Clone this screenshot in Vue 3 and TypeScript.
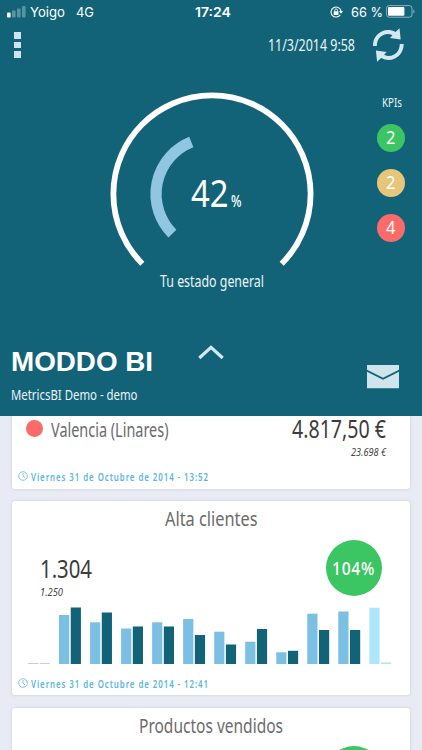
<script setup lang="ts">
import { h } from 'vue'

interface FitProps {
  text: string
  w: number
  cap: number
}

// Condensed label: the box is as wide as the text and as high as its capitals.
const FitText = (props: FitProps) =>
  h('svg', { width: props.w, height: props.cap, overflow: 'visible', class: 'fit' }, [
    h('text', { x: 0, y: props.cap, textLength: props.w, lengthAdjust: 'spacingAndGlyphs' }, props.text),
  ])
FitText.props = ['text', 'w', 'cap']

interface Kpi {
  count: string
  tone: string
}

const kpis: Kpi[] = [
  { count: '2', tone: 'green' },
  { count: '2', tone: 'amber' },
  { count: '4', tone: 'red' },
]

interface Pair {
  a: number
  b: number
  tone?: string
}

const pairs: Pair[] = [
  { a: 1, b: 1, tone: 'empty' },
  { a: 49, b: 56.5 },
  { a: 41.7, b: 51.5 },
  { a: 35.5, b: 37.5 },
  { a: 41.7, b: 37.5 },
  { a: 45, b: 29 },
  { a: 32.3, b: 19.5 },
  { a: 22.3, b: 35 },
  { a: 11.7, b: 13.2 },
  { a: 50.3, b: 34 },
  { a: 52.5, b: 34 },
  { a: 56.3, b: 1.5, tone: 'current' },
]
const pitch = 31.03
const chartHeight = 57
</script>

<template>
  <main class="phone">
    <header class="hero">
      <div class="status">
        <div class="carrier">
          <svg width="19" height="12" viewBox="0 0 19 12" fill="#fff">
            <rect x="0" y="6.5" width="3.6" height="5" rx="1" />
            <rect x="5" y="4.5" width="3.6" height="7" rx="1" opacity=".3" />
            <rect x="10" y="2.5" width="3.6" height="9" rx="1" opacity=".3" />
            <rect x="15" y="0" width="3.6" height="11.5" rx="1" opacity=".3" />
          </svg>
          <FitText class="sys yoigo" text="Yoigo" :w="35" :cap="10" />
          <FitText class="sys" text="4G" :w="18" :cap="10" />
        </div>
        <FitText class="sys clock-time" text="17:24" :w="36" :cap="10" />
        <div class="power">
          <svg class="lock" width="13" height="12" viewBox="0 0 13 12" fill="none" stroke="#fff">
            <path d="M10.2 8.9A5 5 0 1 1 11 5.2" stroke-width="1.1" />
            <path d="M9 5h4l-2 2.7z" fill="#fff" stroke="none" />
            <rect x="3.7" y="5.3" width="4.8" height="3.6" rx=".4" fill="#fff" stroke="none" />
            <path d="M4.7 5.5V4.3a1.4 1.4 0 0 1 2.8 0v1.2" stroke-width=".9" />
          </svg>
          <FitText class="sys" text="66 %" :w="32" :cap="10" />
          <svg class="battery" width="29" height="13" viewBox="0 0 29 13">
            <rect x=".6" y=".6" width="25.4" height="11.6" rx="2.6" fill="none" stroke="#fff" stroke-opacity=".5" />
            <rect x="2" y="2" width="16.4" height="8.8" rx="1" fill="#fff" />
            <path d="M27.3 4.4c1.6.6 1.6 3.4 0 4z" fill="#fff" opacity=".5" />
          </svg>
        </div>
      </div>

      <div class="toolbar">
        <div class="dots"><i></i><i></i><i></i></div>
        <FitText class="stamp" text="11/3/2014 9:58" :w="87" :cap="10.6" />
        <svg class="refresh" width="34" height="34" viewBox="0 0 34 34" fill="#d3e8f0">
          <path d="M2 18C1.5 7 13-2 24.5 4L28.5 .3L29.7 11.5L19 10L21.5 7.2C14 3.5 5.8 9 5.8 18Z" />
          <path d="M2 18C1.5 7 13-2 24.5 4L28.5 .3L29.7 11.5L19 10L21.5 7.2C14 3.5 5.8 9 5.8 18Z" transform="rotate(180 17.3 17)" />
        </svg>
      </div>

      <section class="overview">
        <div class="gauge">
          <svg width="204" height="204" viewBox="-102 -102 204 204" fill="none">
            <path d="M-69.7 69.7A98.6 98.6 0 1 1 69.7 69.7" stroke="#fff" stroke-width="5.8" />
            <path d="M-39.6 39.6A56 56 0 0 1 -20.7 -52" stroke="#91c6e3" stroke-width="11.2" />
          </svg>
          <div class="score">
            <FitText class="big" text="42" :w="37.5" :cap="27" />
            <FitText class="pct" text="%" :w="10.5" :cap="12" />
          </div>
          <FitText class="caption" text="Tu estado general" :w="104" :cap="11" />
        </div>
        <div class="kpis">
          <FitText class="kpi-title" text="KPIs" :w="20" :cap="9" />
          <div v-for="(k, i) in kpis" :key="i" class="badge" :class="k.tone">
            <FitText :text="k.count" :w="9.5" :cap="13" />
          </div>
        </div>
      </section>

      <section class="brand">
        <div class="names">
          <FitText class="logo" text="MODDO BI" :w="142" :cap="19.5" />
          <FitText class="sub" text="MetricsBI Demo - demo" :w="126.5" :cap="10.5" />
        </div>
        <svg class="chevron" width="26" height="15" viewBox="0 0 26 15" fill="none" stroke="#d3e8f0" stroke-width="3.2">
          <path d="M1.3 13L13 2.4L24.7 13" />
        </svg>
        <svg class="mail" width="32" height="24" viewBox="0 0 32 24" fill="#d0e4eb">
          <path d="M0 0H32V4.8L16 12.8L0 4.8Z" />
          <path d="M0 6.8L16 14.8L32 6.8V23.3H0Z" />
        </svg>
      </section>
    </header>

    <div class="cards">
      <article class="card first">
        <div class="place">
          <span class="dot"></span>
          <FitText class="name" text="Valencia (Linares)" :w="117.5" :cap="14" />
          <div class="amounts">
            <FitText class="value" text="4.817,50 €" :w="94" :cap="18" />
            <FitText class="target" text="23.698 €" :w="35" :cap="8" />
          </div>
        </div>
        <div class="when">
          <svg width="10" height="10" viewBox="0 0 10 10" fill="none" stroke="#78c0e3" stroke-width=".9">
            <circle cx="5" cy="5" r="4.3" /><path d="M5 2v3l2 2" />
          </svg>
          <FitText text="Viernes 31 de Octubre de 2014 - 13:52" :w="178" :cap="8" />
        </div>
      </article>

      <article class="card sales">
        <FitText class="title" text="Alta clientes" :w="92.5" :cap="15" />
        <div class="figures">
          <div class="left">
            <FitText class="value" text="1.304" :w="52" :cap="18" />
            <FitText class="target" text="1.250" :w="23" :cap="8" />
          </div>
          <div class="ratio"><FitText text="104%" :w="43" :cap="13" /></div>
        </div>
        <svg class="chart" width="364" :height="chartHeight">
          <g v-for="(p, i) in pairs" :key="i" :class="p.tone">
            <rect class="a" :x="i * pitch" :y="chartHeight - p.a" width="10.2" :height="p.a" />
            <rect class="b" :x="i * pitch + 11.7" :y="chartHeight - p.b" width="10.2" :height="p.b" />
          </g>
        </svg>
        <div class="when">
          <svg width="10" height="10" viewBox="0 0 10 10" fill="none" stroke="#78c0e3" stroke-width=".9">
            <circle cx="5" cy="5" r="4.3" /><path d="M5 2v3l2 2" />
          </svg>
          <FitText text="Viernes 31 de Octubre de 2014 - 12:41" :w="178" :cap="8" />
        </div>
      </article>

      <article class="card products">
        <FitText class="title" text="Productos vendidos" :w="144" :cap="15" />
        <div class="ratio"></div>
      </article>
    </div>
  </main>
</template>

<style>
body {
  background: #e8ebf4;
  overflow: hidden;
}
</style>

<style scoped>
.phone {
  width: 422px;
  height: 750px;
  overflow: hidden;
  background: #e8ebf4;
  font-family: "Noto Sans", "Open Sans", sans-serif;
  font-stretch: 75%;
}
svg {
  display: block;
  flex: none;
}
.fit {
  fill: currentColor;
}
.hero {
  height: 416px;
  background: #126378;
  color: #eaf5f8;
  display: flex;
  flex-direction: column;
}
.status {
  height: 24px;
  display: grid;
  grid-template-columns: 195px 1fr auto;
  align-items: start;
  color: #fff;
}
.sys {
  font-family: Inter, sans-serif;
  font-size: 13.6px;
  font-stretch: normal;
}
.carrier {
  display: flex;
  padding: 6px 0 0 7px;
}
.carrier .sys {
  margin: 1px 11px 0 0;
}
.carrier .yoigo {
  margin-left: 4px;
}
.clock-time {
  margin-top: 7px;
  font-weight: 600;
}
.power {
  display: flex;
  padding: 5px 7px 0 0;
}
.lock {
  margin: 1px 8px 0 0;
}
.power .sys {
  margin: 2px 3px 0 0;
}
.toolbar {
  height: 56.5px;
  display: flex;
  padding: 4px 17px 0 14px;
}
.dots {
  display: grid;
  gap: 3px;
  align-content: start;
  padding-top: 4px;
}
.dots i {
  width: 6.6px;
  height: 6.6px;
  background: #cfe4ec;
}
.stamp {
  margin: 12px 16.5px 0 auto;
  font-size: 15.6px;
}
.overview {
  height: 250px;
  display: flex;
}
.gauge {
  width: 204px;
  margin: 7.5px 0 0 109.5px;
  display: grid;
  grid-template-rows: 204px auto;
  justify-items: center;
  align-content: start;
}
.gauge > svg:first-child,
.score {
  grid-area: 1 / 1;
}
.score {
  display: flex;
  align-items: flex-end;
  gap: 3px;
  align-self: start;
  margin: 88px 0 0 9px;
  color: #fff;
}
.big {
  font-size: 38px;
}
.pct {
  font-size: 16.5px;
  font-weight: 500;
}
.caption {
  margin-top: -20.5px;
  font-size: 15.4px;
  margin-left: 1px;
}
.kpis {
  margin-left: 63.5px;
  width: 28px;
  display: flex;
  flex-direction: column;
  align-items: center;
}
.kpi-title {
  margin: 13px 0 17px 2px;
  font-size: 12.5px;
}
.badge {
  width: 28px;
  height: 28px;
  margin-bottom: 17px;
  border-radius: 50%;
  display: grid;
  place-items: center;
  font-size: 18.5px;
  color: #fff;
}
.green {
  background: #3cc663;
}
.amber {
  background: #e7c679;
}
.red {
  background: #fa6b69;
}
.brand {
  display: flex;
  padding: 10px 23.5px 0 11.5px;
}
.names {
  width: 188px;
}
.logo {
  font: bold 27px "Liberation Sans", sans-serif;
  color: #fff;
  margin: 6.5px 0 18px -.7px;
}
.sub {
  font-size: 14.8px;
  margin-left: -.5px;
}
.chevron {
  margin-left: -1.5px;
}
.mail {
  margin: 20px 0 0 auto;
}
.cards {
  padding: 0 12px;
}
.card {
  box-sizing: border-box;
  background: #fff;
  border-radius: 3px;
  box-shadow: 0 0 3px rgba(80, 80, 110, .2);
  margin-bottom: 12.5px;
  display: flex;
  flex-direction: column;
}
.first {
  height: 72.5px;
  border-radius: 0 0 3px 3px;
  clip-path: inset(0 -5px -5px -5px);
}
.place {
  height: 54.5px;
  display: flex;
  padding-left: 14px;
}
.dot {
  width: 17px;
  height: 17px;
  margin-top: 4px;
  border-radius: 50%;
  background: #fa6b69;
}
.name {
  margin: 6.5px 0 0 7.5px;
  font-size: 19.5px;
  color: #6b6b6b;
}
.amounts {
  margin: 4px 24px 0 auto;
  display: flex;
  flex-direction: column;
  align-items: flex-end;
}
.value {
  font-size: 25.5px;
  color: #3c3c3c;
}
.target {
  margin-top: 10px;
  font-size: 11.4px;
  font-style: italic;
  color: #444;
}
.when {
  display: flex;
  padding-left: 5.8px;
  gap: 3px;
  color: #5bb5de;
  font-size: 10.8px;
  font-weight: 600;
  letter-spacing: 1.3px;
}
.when .fit {
  margin-top: 2px;
}
.sales {
  height: 194px;
}
.title {
  align-self: center;
  margin-top: 10px;
  font-size: 20.5px;
  color: #6b6b6b;
}
.figures {
  height: 81px;
  display: flex;
  justify-content: space-between;
  padding: 0 28.5px 0 28px;
}
.left {
  padding-top: 33.5px;
}
.ratio {
  width: 56px;
  height: 56px;
  margin-top: 14px;
  border-radius: 50%;
  background: #3cc663;
  display: grid;
  place-items: center;
  color: #fff;
  font-size: 18px;
  font-weight: 500;
  letter-spacing: .8px;
}
.chart {
  margin: 0 0 13.5px 15.5px;
}
.a {
  fill: #7bbfe3;
}
.b {
  fill: #126378;
}
.empty rect {
  fill: #cdcdcd;
}
.current rect {
  fill: #aee6fc;
}
.products {
  height: 194px;
}
.products .ratio {
  margin: 13.5px 28.5px 0 auto;
}
</style>
